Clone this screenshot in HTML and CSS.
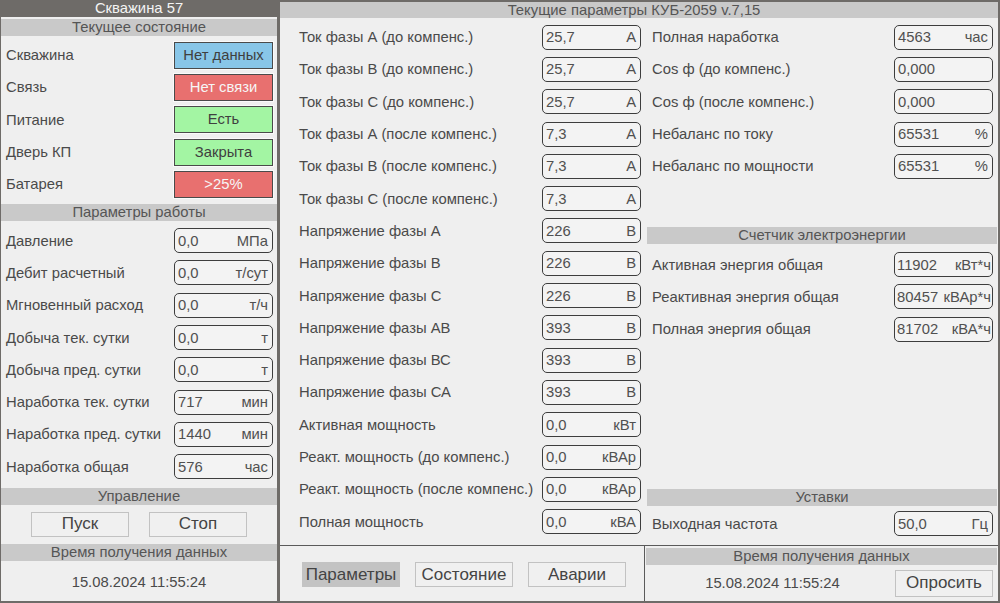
FILE: index.html
```html
<!DOCTYPE html>
<html lang="ru">
<head>
    <meta charset="UTF-8">
    <title>Скважина 57</title>
    <link rel="stylesheet" href="styles.css">
</head>
<body>
<div class="screen">
    <div class="left">
        <div class="title">Скважина 57</div>
        <div class="left-panel">
            <div class="section-head">Текущее состояние</div>
            <div class="rows state-rows">
                <div class="row"><span>Скважина</span><span class="state blue">Нет данных</span></div>
                <div class="row"><span>Связь</span><span class="state red">Нет связи</span></div>
                <div class="row"><span>Питание</span><span class="state green">Есть</span></div>
                <div class="row"><span>Дверь КП</span><span class="state green">Закрыта</span></div>
                <div class="row"><span>Батарея</span><span class="state red">&gt;25%</span></div>
            </div>
            <div class="section-head work-head">Параметры работы</div>
            <div class="rows work-rows">
                <div class="row"><span>Давление</span><span class="value"><span>0,0</span><span>МПа</span></span></div>
                <div class="row"><span>Дебит расчетный</span><span class="value"><span>0,0</span><span>т/сут</span></span></div>
                <div class="row"><span>Мгновенный расход</span><span class="value"><span>0,0</span><span>т/ч</span></span></div>
                <div class="row"><span>Добыча тек. сутки</span><span class="value"><span>0,0</span><span>т</span></span></div>
                <div class="row"><span>Добыча пред. сутки</span><span class="value"><span>0,0</span><span>т</span></span></div>
                <div class="row"><span>Наработка тек. сутки</span><span class="value"><span>717</span><span>мин</span></span></div>
                <div class="row"><span>Наработка пред. сутки</span><span class="value"><span>1440</span><span>мин</span></span></div>
                <div class="row"><span>Наработка общая</span><span class="value"><span>576</span><span>час</span></span></div>
            </div>
            <div class="section-head control-head">Управление</div>
            <div class="controls">
                <button class="btn">Пуск</button>
                <button class="btn">Стоп</button>
            </div>
            <div class="section-head">Время получения данных</div>
            <div class="stamp">15.08.2024 11:55:24</div>
        </div>
    </div>

    <div class="main">
        <div class="main-head">Текущие параметры КУБ-2059 v.7,15</div>
        <div class="content">
            <div class="col-mid">
                <div class="row"><span>Ток фазы А (до компенс.)</span><span class="value"><span>25,7</span><span>А</span></span></div>
                <div class="row"><span>Ток фазы В (до компенс.)</span><span class="value"><span>25,7</span><span>А</span></span></div>
                <div class="row"><span>Ток фазы С (до компенс.)</span><span class="value"><span>25,7</span><span>А</span></span></div>
                <div class="row"><span>Ток фазы А (после компенс.)</span><span class="value"><span>7,3</span><span>А</span></span></div>
                <div class="row"><span>Ток фазы В (после компенс.)</span><span class="value"><span>7,3</span><span>А</span></span></div>
                <div class="row"><span>Ток фазы С (после компенс.)</span><span class="value"><span>7,3</span><span>А</span></span></div>
                <div class="row"><span>Напряжение фазы А</span><span class="value"><span>226</span><span>В</span></span></div>
                <div class="row"><span>Напряжение фазы В</span><span class="value"><span>226</span><span>В</span></span></div>
                <div class="row"><span>Напряжение фазы С</span><span class="value"><span>226</span><span>В</span></span></div>
                <div class="row"><span>Напряжение фазы АВ</span><span class="value"><span>393</span><span>В</span></span></div>
                <div class="row"><span>Напряжение фазы ВС</span><span class="value"><span>393</span><span>В</span></span></div>
                <div class="row"><span>Напряжение фазы СА</span><span class="value"><span>393</span><span>В</span></span></div>
                <div class="row"><span>Активная мощность</span><span class="value"><span>0,0</span><span>кВт</span></span></div>
                <div class="row"><span>Реакт. мощность (до компенс.)</span><span class="value"><span>0,0</span><span>кВАр</span></span></div>
                <div class="row"><span>Реакт. мощность (после компенс.)</span><span class="value"><span>0,0</span><span>кВАр</span></span></div>
                <div class="row"><span>Полная мощность</span><span class="value"><span>0,0</span><span>кВА</span></span></div>
            </div>
            <div class="col-right">
                <div class="row"><span>Полная наработка</span><span class="value"><span>4563</span><span>час</span></span></div>
                <div class="row"><span>Cos ф (до компенс.)</span><span class="value"><span>0,000</span><span></span></span></div>
                <div class="row"><span>Cos ф (после компенс.)</span><span class="value"><span>0,000</span><span></span></span></div>
                <div class="row"><span>Небаланс по току</span><span class="value"><span>65531</span><span>%</span></span></div>
                <div class="row"><span>Небаланс по мощности</span><span class="value"><span>65531</span><span>%</span></span></div>

                <div class="group meter">
                    <div class="section-head">Счетчик электроэнергии</div>
                    <div class="group-rows">
                        <div class="row"><span>Активная энергия общая</span><span class="value tight"><span>11902</span><span>кВт*ч</span></span></div>
                        <div class="row"><span>Реактивная энергия общая</span><span class="value tight"><span>80457</span><span>кВАр*ч</span></span></div>
                        <div class="row"><span>Полная энергия общая</span><span class="value tight"><span>81702</span><span>кВА*ч</span></span></div>
                    </div>
                </div>

                <div class="group settings">
                    <div class="section-head">Уставки</div>
                    <div class="group-rows">
                        <div class="row"><span>Выходная частота</span><span class="value"><span>50,0</span><span>Гц</span></span></div>
                    </div>
                </div>
            </div>
        </div>
        <div class="bottom">
            <div class="tabs">
                <button class="btn tab active">Параметры</button>
                <button class="btn tab">Состояние</button>
                <button class="btn tab">Аварии</button>
            </div>
            <div class="poll">
                <div class="section-head">Время получения данных</div>
                <div class="poll-row">
                    <span class="poll-date">15.08.2024 11:55:24</span>
                    <button class="btn poll-btn">Опросить</button>
                </div>
            </div>
        </div>
    </div>
</div>
</body>
</html>
```

FILE: styles.css
```css
body {
    margin: 0;
    background: #6e6b68;
    font-family: "Liberation Sans", Arial, sans-serif;
    font-size: 14.8px;
    color: #4a4a4a;
}

.screen {
    display: flex;
    gap: 3px;
    height: 603px;
    box-sizing: border-box;
    padding: 0 2px 2px 1px;
}

/* left column */

.left {
    width: 276px;
    display: flex;
    flex-direction: column;
}

.title {
    height: 17px;
    line-height: 17px;
    text-align: center;
    color: #f4f4f4;
}

.left-panel {
    flex: 1;
    display: flex;
    flex-direction: column;
    background: #efefef;
    padding-top: 2px;
}

.section-head {
    height: 17px;
    line-height: 17px;
    background: #c9c9c9;
    color: #555;
    text-align: center;
}

.row {
    height: 32.3px;
    display: flex;
    align-items: center;
    justify-content: space-between;
    white-space: nowrap;
}

.rows .row {
    padding: 0 4px 0 5px;
}

.state-rows {
    padding-top: 3px;
}

.work-head {
    margin-top: 4px;
}

.work-rows {
    padding-top: 3px;
}

.control-head {
    margin-top: 5px;
}

.state {
    width: 97px;
    height: 25px;
    line-height: 25px;
    text-align: center;
    border: 1px solid #4a4a4a;
    box-shadow: 0 0 0 1px #fafafa;
}

.state.blue { background: #88c6e8; color: #3f3f3f; }
.state.red { background: #e8706f; color: #f6f6f6; }
.state.green { background: #a3f5a3; color: #3f3f3f; }

.value {
    width: 99px;
    height: 25px;
    box-sizing: border-box;
    display: flex;
    align-items: center;
    justify-content: space-between;
    padding: 0 4px 0 3px;
    border: 1.5px solid #3d3d3d;
    border-radius: 5px;
    background: #f3f3f3;
    color: #505050;
}

.value.tight {
    padding: 0 1px 0 2px;
}

.controls {
    height: 39px;
    display: flex;
    align-items: center;
    gap: 20px;
    padding-left: 30px;
}

.btn {
    width: 98px;
    height: 25px;
    padding: 0;
    border: 1px solid #c2c2c2;
    background: #f0f0f0;
    color: #444;
    font-family: inherit;
    font-size: 17px;
}

.stamp {
    flex: 1;
    display: flex;
    align-items: center;
    justify-content: center;
    padding-top: 2px;
}

/* main panel */

.main {
    flex: 1;
    margin-top: 2px;
    display: flex;
    flex-direction: column;
    background: #efefef;
}

.main-head {
    height: 16px;
    line-height: 16px;
    background: #c9c9c9;
    color: #555;
    text-align: center;
    padding-right: 10px;
}

.content {
    flex: 1;
    display: flex;
    border-bottom: 1px solid #5a5a5a;
}

.col-mid {
    width: 365px;
    padding: 3px 4px 0 19px;
    box-sizing: border-box;
}

.col-right {
    flex: 1;
    display: flex;
    flex-direction: column;
    padding: 3px 0 5px 0;
}

.col-right .row {
    padding: 0 5px 0 7px;
}

.col-right .section-head {
    margin: 0 1px 0 2px;
}

.meter {
    margin-top: 45px;
}

.group-rows {
    padding-top: 4px;
}

.settings {
    margin-top: auto;
}

.settings .group-rows {
    padding-top: 2px;
}

/* bottom bar */

.bottom {
    height: 55px;
    display: flex;
}

.tabs {
    width: 365px;
    display: flex;
    align-items: center;
    gap: 15px;
    padding: 2px 0 0 22px;
    box-sizing: border-box;
    border-right: 1px solid #5a5a5a;
}

.tab {
    width: 98px;
}

.tab.active {
    background: #c3c3c3;
    border-color: #c3c3c3;
}

.poll {
    flex: 1;
    display: flex;
    flex-direction: column;
    padding-top: 2px;
}

.poll .section-head {
    margin: 0 1px 0 1px;
}

.poll-row {
    flex: 1;
    display: flex;
    align-items: center;
    padding-right: 5px;
}

.poll-date {
    flex: 1;
    text-align: center;
    padding-left: 5px;
}

.poll-btn {
    height: 27px;
}
```
